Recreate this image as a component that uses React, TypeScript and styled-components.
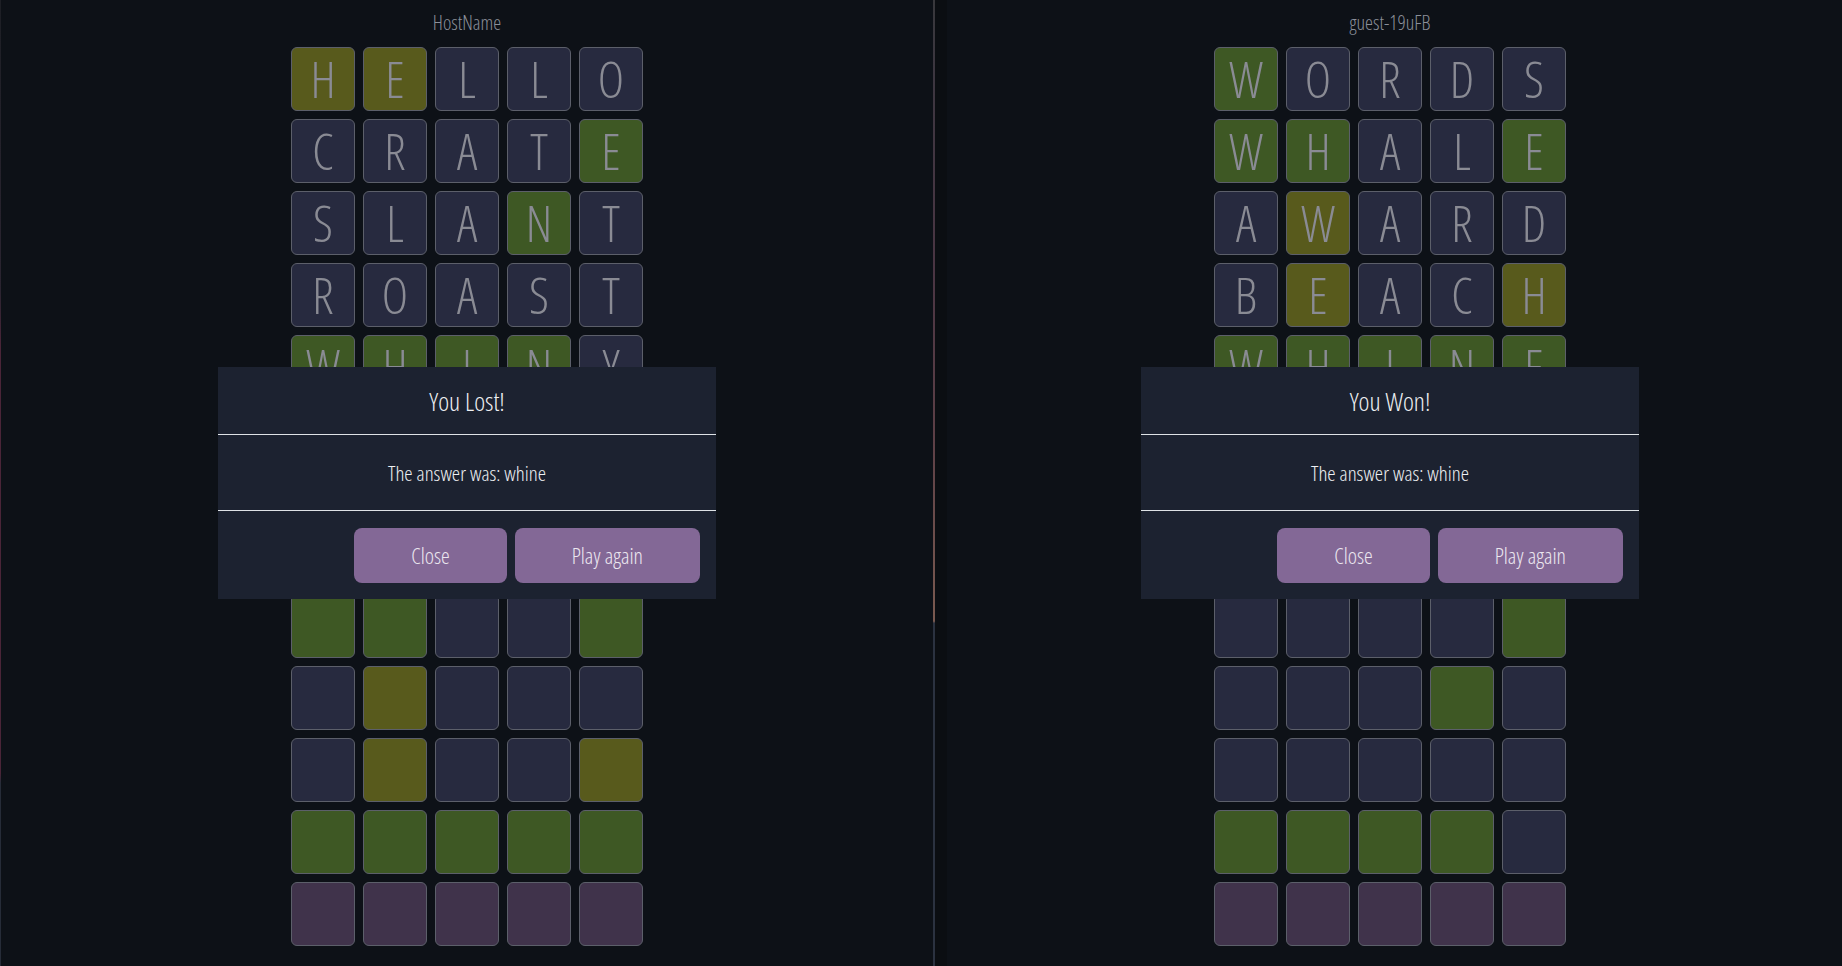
import React from 'react';
import styled, { createGlobalStyle } from 'styled-components';

type TileState = 'absent' | 'present' | 'correct' | 'empty';

const tileColors: Record<TileState, string> = {
  absent: '#272a3f',
  present: '#585a1c',
  correct: '#3e5824',
  empty: '#40334b',
};

const GlobalStyle = createGlobalStyle`
  html, body {
    margin: 0;
    padding: 0;
    height: 100%;
    overflow: hidden;
    background: #0d1117;
  }
  body {
    font-family: "Open Sans", "Liberation Sans", sans-serif;
    font-stretch: 75%;
  }
  #root { height: 100%; }
  * { box-sizing: border-box; }
`;

const Page = styled.div`
  display: grid;
  grid-template-columns: 932px 2px 1fr;
  height: 966px;
  border-left: 1px solid transparent;
  border-image: linear-gradient(
      to bottom,
      #1d1f25 0%,
      #2a2430 30%,
      #4a2538 36%,
      #4a2538 80%,
      #262c38 81%,
      #262c38 100%
    )
    1;
  background: #0d1117;
`;

const Divider = styled.div`
  background: linear-gradient(
    to bottom,
    #38383c 0%,
    #3c3640 8%,
    #4a3543 28%,
    #5c3f46 45%,
    #7a5a50 64.3%,
    #2b3240 64.5%,
    #2b3240 100%
  );
`;

const Panel = styled.section<{ $strip?: boolean }>`
  position: relative;
  overflow: hidden;
  display: flex;
  flex-direction: column;
  align-items: center;
  gap: 4px;
  padding-left: ${(p) => (p.$strip ? '3px' : '0')};
  background: ${(p) =>
    p.$strip ? 'linear-gradient(to right, #0b0e12 0 12px, #0d1117 12px)' : '#0d1117'};
`;

const Board = styled.div`
  display: flex;
  flex-direction: column;
  align-items: center;
`;

const PlayerName = styled.div`
  padding-top: 11px;
  margin-bottom: 12px;
  font-size: 20px;
  font-weight: 300;
  line-height: 24px;
  color: #8b8f99;
`;

const Grid = styled.div`
  display: grid;
  grid-template-columns: repeat(5, 64px);
  grid-auto-rows: 64px;
  gap: 8px;
`;

const Tile = styled.div<{ $state: TileState }>`
  display: flex;
  align-items: center;
  justify-content: center;
  border: 1px solid #5c5f6a;
  border-radius: 6px;
  background: ${(p) => tileColors[p.$state]};
  color: #8a8b94;
  font-size: 50px;
  font-weight: 300;
  line-height: 1;
`;

const Overlay = styled.div`
  position: absolute;
  inset: 0;
  padding-left: inherit;
  display: flex;
  align-items: center;
  justify-content: center;
`;

const Modal = styled.div`
  width: 498px;
  background: #1c2230;
  color: #eef0f3;
  font-weight: 350;
`;

const ModalHeader = styled.div`
  height: 68px;
  border-bottom: 1px solid #dee2e6;
  display: flex;
  align-items: center;
  justify-content: center;
  font-size: 26px;
`;

const ModalBody = styled.div`
  height: 76px;
  border-bottom: 1px solid #dee2e6;
  display: flex;
  align-items: center;
  justify-content: center;
  font-size: 21px;
`;

const ModalFooter = styled.div`
  height: 88px;
  display: flex;
  align-items: center;
  justify-content: flex-end;
  gap: 8px;
  padding: 0 16px;
`;

const Button = styled.button`
  height: 55px;
  padding: 0 57px;
  border: none;
  border-radius: 8px;
  background: #836896;
  color: #ebe6ef;
  font-family: inherit;
  font-stretch: 75%;
  font-weight: 350;
  font-size: 22px;
  cursor: pointer;
`;

type Row = { letters?: string; states: TileState[] };

const s = (code: string): TileState[] =>
  code.split('').map((c) =>
    c === 'g' ? 'correct' : c === 'y' ? 'present' : c === 'p' ? 'empty' : 'absent'
  );

type PlayerData = {
  name: string;
  opponent: string;
  result: string;
  guesses: Row[];
  opponentRows: Row[];
};

const players: PlayerData[] = [
  {
    name: 'HostName',
    opponent: 'guest-19uFB',
    result: 'You Lost!',
    guesses: [
      { letters: 'HELLO', states: s('yyxxx') },
      { letters: 'CRATE', states: s('xxxxg') },
      { letters: 'SLANT', states: s('xxxgx') },
      { letters: 'ROAST', states: s('xxxxx') },
      { letters: 'WHINY', states: s('ggggx') },
      { letters: 'WHILE', states: s('gggxg') },
    ],
    opponentRows: [
      { states: s('xxxxg') },
      { states: s('ggxxg') },
      { states: s('xyxxx') },
      { states: s('xyxxy') },
      { states: s('ggggg') },
      { states: s('ppppp') },
    ],
  },
  {
    name: 'guest-19uFB',
    opponent: 'HostName',
    result: 'You Won!',
    guesses: [
      { letters: 'WORDS', states: s('gxxxx') },
      { letters: 'WHALE', states: s('ggxxg') },
      { letters: 'AWARD', states: s('xyxxx') },
      { letters: 'BEACH', states: s('xyxxy') },
      { letters: 'WHINE', states: s('ggggg') },
      { states: s('ppppp') },
    ],
    opponentRows: [
      { states: s('yyxxx') },
      { states: s('xxxxg') },
      { states: s('xxxgx') },
      { states: s('xxxxx') },
      { states: s('ggggx') },
      { states: s('ppppp') },
    ],
  },
];

const BoardView: React.FC<{ name: string; rows: Row[] }> = ({ name, rows }) => (
  <Board>
    <PlayerName>{name}</PlayerName>
    <Grid>
      {rows.map((row, r) =>
        row.states.map((st, c) => (
          <Tile key={`${r}-${c}`} $state={st}>
            {row.letters ? row.letters[c] : ''}
          </Tile>
        ))
      )}
    </Grid>
  </Board>
);

const PlayerPanel: React.FC<{ data: PlayerData; strip?: boolean }> = ({ data, strip }) => (
  <Panel $strip={strip}>
    <BoardView name={data.name} rows={data.guesses} />
    <BoardView name={data.opponent} rows={data.opponentRows} />
    <Overlay>
      <Modal>
        <ModalHeader>{data.result}</ModalHeader>
        <ModalBody>The answer was: whine</ModalBody>
        <ModalFooter>
          <Button>Close</Button>
          <Button>Play again</Button>
        </ModalFooter>
      </Modal>
    </Overlay>
  </Panel>
);

export default function App() {
  return (
    <>
      <GlobalStyle />
      <Page>
        <PlayerPanel data={players[0]} />
        <Divider />
        <PlayerPanel data={players[1]} strip />
      </Page>
    </>
  );
}
